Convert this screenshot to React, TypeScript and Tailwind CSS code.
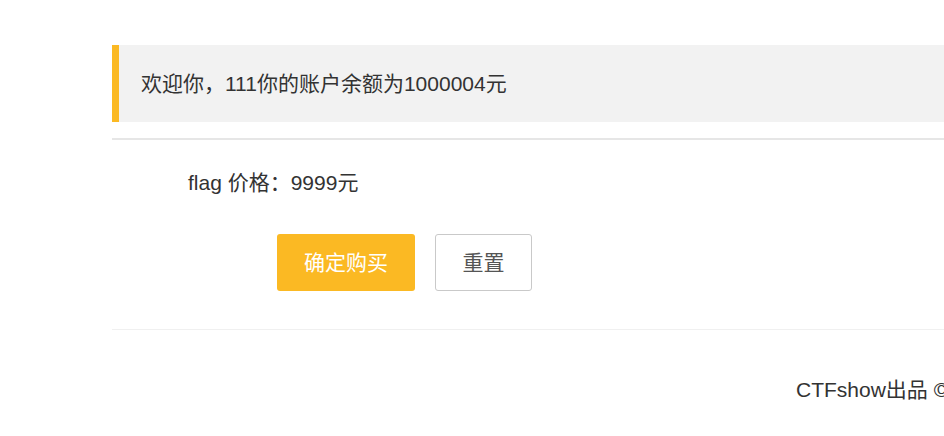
export default function App() {
  const font = { fontFamily: '"Liberation Sans", "Noto Sans CJK SC", sans-serif' };
  return (
    <div className="w-full h-[436px] overflow-hidden bg-white text-[#333] text-[21px]" style={font}>
      <div className="ml-[112px] w-[1400px] pt-[45px]">
        {/* 欢迎信息 */}
        <div className="h-[77px] flex items-center bg-[#f2f2f2] border-l-[7px] border-[#fbb923] pl-[22px] whitespace-nowrap">
          欢迎你，111你的账户余额为1000004元
        </div>
        <div className="mt-[16px] h-[2px] bg-[#e6e6e6]"></div>

        {/* 购买表单 */}
        <div className="h-[190px] border-b border-[#f0f0f0]">
          <div className="pl-[76px] pt-[28px] h-[30px] leading-[30px] box-content whitespace-nowrap">
            flag 价格：9999元
          </div>
          <div className="flex gap-[20px] pl-[165px] mt-[36px]">
            <button className="w-[138px] h-[57px] rounded-[3px] bg-[#fbb923] text-white">
              确定购买
            </button>
            <button className="w-[97px] h-[57px] rounded-[3px] border border-[#c9c9c9] bg-white text-[#555]">
              重置
            </button>
          </div>
        </div>

        {/* 页脚 */}
        <div className="pl-[684px] pt-[45px] leading-[30px] whitespace-nowrap">
          CTFshow出品 © 2021
        </div>
      </div>
    </div>
  );
}
